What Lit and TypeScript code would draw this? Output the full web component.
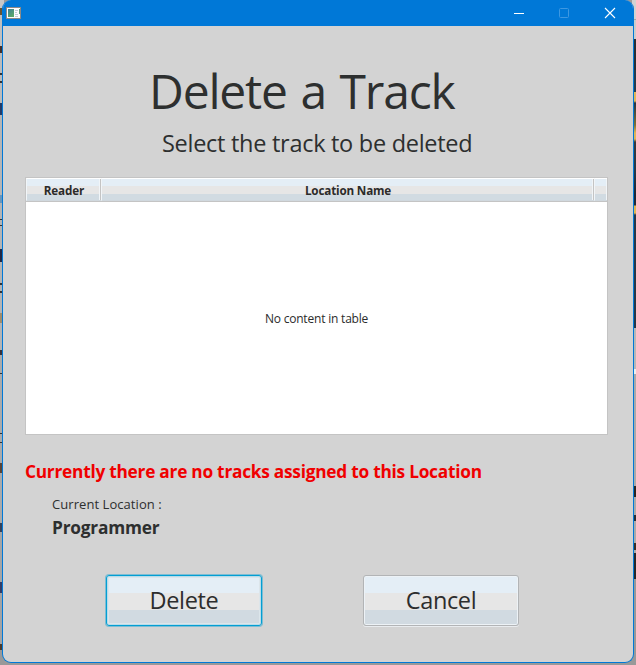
import { LitElement, html, css } from "lit";
import { customElement, property } from "lit/decorators.js";

@customElement("title-bar")
export class TitleBar extends LitElement {
  static styles = css`
    :host { display: flex; height: 26px; background: #0078d7; justify-content: space-between; }
    .app { width: 15px; height: 12px; margin: 7px 0 0 3px; display: block; }
    .controls { display: flex; padding-right: 1px; }
    .control { width: 45px; height: 26px; display: block; }
  `;
  render() {
    return html`
      <svg class="app" viewBox="0 0 15 12">
        <rect width="15" height="12" fill="#8d8a87" />
        <rect x="1" y="1" width="13" height="10" fill="#fbfcfd" />
        <defs><linearGradient id="g" x1="0" y1="0" x2="0.6" y2="1">
          <stop offset="0" stop-color="#3c7f98" /><stop offset="1" stop-color="#5aa868" />
        </linearGradient></defs>
        <rect x="2" y="2" width="6" height="8" fill="url(#g)" />
        <path d="M9 3.5h3M9 5.5h2M9 7.5h3M9 9.5h3" stroke="#c3ccd8" />
        <path d="M13.5 2v5" stroke="#5b9a7c" />
      </svg>
      <div class="controls">
        <svg class="control" viewBox="0 0 45 26" fill="none">
          <path d="M17 13.5h10" stroke="#fff" />
        </svg>
        <svg class="control" viewBox="0 0 45 26" fill="none">
          <rect x="17.5" y="8.5" width="9" height="9" rx="1" stroke="#3d98e2" />
        </svg>
        <svg class="control" viewBox="0 0 45 26" fill="none">
          <path d="M18 8l10 10M28 8L18 18" stroke="#fff" stroke-width="1.1" />
        </svg>
      </div>
    `;
  }
}

@customElement("track-table")
export class TrackTable extends LitElement {
  static styles = css`
    :host { display: flex; flex-direction: column; box-sizing: border-box; width: 583px; height: 258px;
      border: 1px solid #c4c4c4; background: #fff; color: #2b2b2b; }
    .head { display: grid; grid-template-columns: 75px 493px 13px; height: 24px; box-sizing: border-box;
      border-bottom: 1px solid #c4c4c4; }
    .cell { box-sizing: border-box; height: 23px; border: 1px solid; border-right: 0;
      border-color: #fff #e9eef2 #d0d8de #f1f5f8; text-align: center;
      box-shadow: inset -1px 0 #c4c4c4, inset -2px 0 #f1f5f8;
      background: linear-gradient(#e4eef6 0 7px, #e6e6e6 7px 15px, #d1dbe2 15px);
      font: 700 11.7px/23px "Open Sans", "Noto Sans", sans-serif; }
    .cell:last-child { box-shadow: inset -1px 0 #f1f5f8; }
    .reader { letter-spacing: -0.15px; }
    .location { letter-spacing: -0.18px; }
    .empty { flex: 1; text-align: center; font: 12px/233px "Open Sans", "Noto Sans", sans-serif; letter-spacing: -0.2px; }
  `;
  render() {
    return html`
      <div class="head">
        <div class="cell reader">Reader</div>
        <div class="cell location">Location Name</div>
        <div class="cell"></div>
      </div>
      <div class="empty">No content in table</div>
    `;
  }
}

@customElement("push-button")
export class PushButton extends LitElement {
  @property({ type: Boolean, reflect: true }) focused = false;
  static styles = css`
    :host { display: block; }
    .button { display: block; width: 156px; height: 51px; box-sizing: border-box; padding: 0 0 1px; border: 1px solid #b2b4b6;
      border-radius: 3px; color: #2d2d2d; box-shadow: inset 0 0 0 1px #edf2f6, 0 1px #e9ecef;
      background: linear-gradient(#e4eef6 0 17px, #e6e6e6 17px 34px, #d1dae1 34px);
      font: 23.5px/48px "Open Sans", "Noto Sans", sans-serif; text-align: center; letter-spacing: -0.35px; }
    :host([focused]) .button { border-color: #039ed3;
      box-shadow: 0 0 0 1px #7dbdd3, inset 0 0 0 1px #b8dce9, inset 0 0 0 2px #dce5ea; }
  `;
  render() {
    return html`<button class="button"><slot></slot></button>`;
  }
}

@customElement("app-root")
export class AppRoot extends LitElement {
  static styles = css`
    :host { display: block; box-sizing: border-box; width: 636px; height: 665px; padding: 0 2px 2px; overflow: hidden;
      background:
        linear-gradient(#d2d2d2 0 19px, #a5a5a5 19px 20px, #cccccc 20px 39px, #292e33 39px 70px, #263b4c 70px 92px,
          #e0b65a 92px 101px, #263442 103px, #7d7136 125px, #dfb559 133px 139px, #38393b 142px, #263847 170px,
          #1d2634 195px, #202b38 205px, #e1b653 206px 213px, #263747 215px 328px, #b8b8b8 328px 369px,
          #eee 369px 374px, #aaa 374px 486px, #292420 486px 497px, #aaa 497px 515px, #272c32 515px 521px,
          #aaa 521px 543px, #382d25 543px 550px, #aaa 550px 553px, #25272a 553px 579px, #999 579px)
          right top / 4px 663px no-repeat,
        linear-gradient(#c8c8c8 0 8px, #665333 8px 15px, #bfbfbf 15px 46px, #43302b 46px 53px, #bbb 53px 73px,
          #333 73px 75px, #bbb 75px 81px, #333 81px 83px, #bbb 83px 103px, #243b67 103px 115px, #b5b5b5 115px 195px,
          #6796bd 195px 203px, #b4b4b4 203px 219px, #333 219px 220px, #b4b4b4 220px 225px, #333 225px 226px,
          #b4b4b4 226px 249px, #202845 249px 262px, #b4b4b4 262px 283px, #333 283px 285px, #b4b4b4 285px 291px,
          #333 291px 293px, #b4b4b4 293px 313px, #a18c6b 313px 323px, #b4b4b4 323px 350px, #393139 350px 355px,
          #aaa 355px 373px, #343434 373px 374px, #aaa 374px 433px, #333 433px 434px, #aaa 434px 442px,
          #333 442px 443px, #aaa 443px 463px, #5b4536 463px 473px, #aaa 473px 523px, #34425b 523px 532px,
          #a5a5a5 532px 582px, #323d67 582px 593px, #a3a3a3 593px 644px, #4b3a2b 644px 650px, #999 650px)
          left top / 4px 663px no-repeat,
        #999; }
    .window { box-sizing: border-box; width: 632px; height: 663px; overflow: hidden; border: 1px solid #0078d7;
      border-top: 0; border-radius: 9px; background: #d3d3d3; color: #2d2f2f;
      font-family: "Open Sans", "Noto Sans", sans-serif; }
    .content { padding: 30px 25px 0 22px; }
    .title { margin: 0 0 0 124px; font-size: 48px; line-height: 70px; font-weight: 400; letter-spacing: -1.2px; word-spacing: 2.4px;
      white-space: nowrap; }
    .subtitle { margin: 0 0 0 137px; font-size: 23.5px; line-height: 34px; padding-bottom: 17px; letter-spacing: -0.28px; white-space: nowrap; }
    .notice { margin: 0; font-size: 17.3px; line-height: 26px; padding-top: 24px; font-weight: 700; letter-spacing: -0.25px;
      color: #f00000; white-space: nowrap; }
    .label { margin: 10px 0 0 27px; font-size: 13px; line-height: 18px; letter-spacing: 0.06px; }
    .place { margin: 2px 0 0 27px; font-size: 17.3px; line-height: 26px; font-weight: 700; letter-spacing: -0.2px; }
    .actions { display: flex; gap: 101px; margin: 34px 0 0 81px; }
  `;
  render() {
    return html`
      <div class="window">
        <title-bar></title-bar>
        <div class="content">
          <h1 class="title">Delete a Track</h1>
          <p class="subtitle">Select the track to be deleted</p>
          <track-table></track-table>
          <p class="notice">Currently there are no tracks assigned to this Location</p>
          <p class="label">Current Location :</p>
          <p class="place">Programmer</p>
          <div class="actions">
            <push-button focused>Delete</push-button>
            <push-button>Cancel</push-button>
          </div>
        </div>
      </div>
    `;
  }
}
